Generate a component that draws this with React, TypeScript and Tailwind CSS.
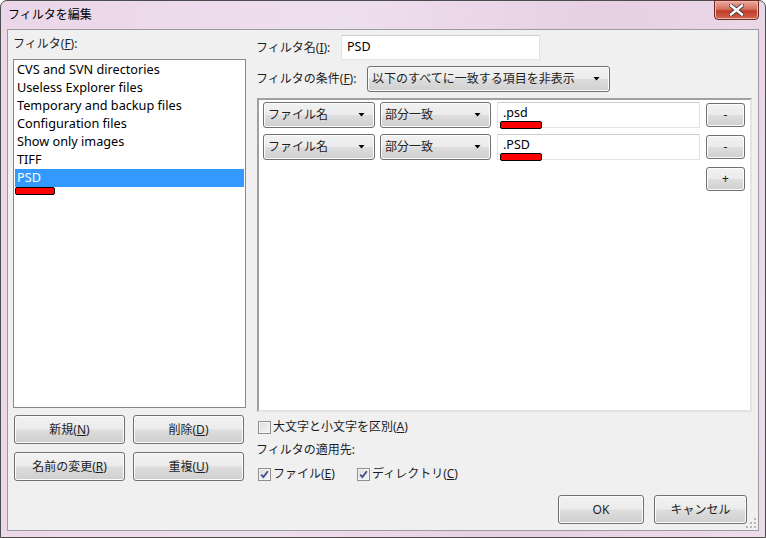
import React from "react";

const btnFace =
  "border border-[#707070] rounded-[3px] bg-[linear-gradient(#f2f2f2,#ebebeb_48%,#dddddd_52%,#cfcfcf)] shadow-[inset_0_0_0_1px_#fcfcfc]";

const Key = ({ k }: { k: string }) => <span className="underline">{k}</span>;

function Button({ className = "", children }: { className?: string; children: React.ReactNode }) {
  return (
    <div className={`flex items-center justify-center text-[12px] text-[#1e1e1e] ${btnFace} ${className}`}>
      {children}
    </div>
  );
}

function Select({ className = "", children }: { className?: string; children: React.ReactNode }) {
  return (
    <div className={`flex items-center justify-between pl-[4px] pr-[9px] text-[12px] text-[#1e1e1e] ${btnFace} ${className}`}>
      <span>{children}</span>
      <svg width="7" height="4" viewBox="0 0 7 4">
        <path d="M0.5 0h6L3.5 3.5z" fill="#000" />
      </svg>
    </div>
  );
}

function Input({ className = "", children }: { className?: string; children?: React.ReactNode }) {
  return (
    <div
      className={`relative flex items-center bg-white border border-[#dfe3e8] border-t-[#c9ced4] pl-[5px] text-[12.5px] text-black ${className}`}
    >
      {children}
    </div>
  );
}

function RedMark({ className = "" }: { className?: string }) {
  return <div className={`absolute h-[8px] bg-[#ff0000] border-[1.5px] border-black rounded-[2px] ${className}`} />;
}

function Checkbox({ checked }: { checked?: boolean }) {
  return (
    <div className="w-[13px] h-[13px] border border-[#8e8f8f] bg-[linear-gradient(135deg,#dcdcdc,#f6f6f6)] flex items-center justify-center shadow-[inset_0_0_0_1px_#f4f4f4]">
      {checked && (
        <svg width="9" height="9" viewBox="0 0 9 9">
          <path d="M1.2 4.6 L3.4 7 L7.8 1.2" stroke="#3c4f8c" strokeWidth="1.8" fill="none" />
        </svg>
      )}
    </div>
  );
}

const filters = [
  "CVS and SVN directories",
  "Useless Explorer files",
  "Temporary and backup files",
  "Configuration files",
  "Show only images",
  "TIFF",
  "PSD",
];

export default function App() {
  return (
    <div className="w-[766px] h-[538px] font-['Noto_Sans','Noto_Sans_CJK_JP',sans-serif] bg-white">
      <div className="relative w-full h-full rounded-t-[7px] border border-[#4d4d4d] bg-[linear-gradient(100deg,#ead6e8,#eedfee_40%,#e6d0e4_70%,#ecdcea)] flex flex-col">
        {/* title bar */}
        <div className="h-[28px] flex items-center pl-[7px] pb-[1px] text-[12px] text-black shrink-0">フィルタを編集</div>
        <div className="absolute right-[6px] top-[-1px] w-[45px] h-[20px] rounded-b-[4px] border border-[#6b2a22] bg-[linear-gradient(#eba89b,#d7705f_45%,#c23b28_55%,#d2664f)] flex items-center justify-center shadow-[inset_0_0_0_1px_#f0b7aa]">
          <svg width="15" height="12" viewBox="0 0 15 12">
            <path d="M2 1.5 L13 10.5 M13 1.5 L2 10.5" stroke="#3a3a3a" strokeWidth="4.2" strokeLinecap="square" />
            <path d="M2 1.5 L13 10.5 M13 1.5 L2 10.5" stroke="#fff" strokeWidth="2.4" strokeLinecap="square" />
          </svg>
        </div>

        {/* client */}
        <div className="mx-[6px] mb-[6px] flex-1 border border-[#9a9aa0] bg-[#f0f0f0] flex relative">
          {/* left column */}
          <div className="ml-[5px] w-[233px] flex flex-col">
            <div className="h-[29px] flex items-center pb-[1px] text-[12px] text-[#1e1e1e]">
              フィルタ(<Key k="F" />):
            </div>
            <div className="relative h-[349px] bg-white border border-[#828790] pt-[1px] px-[1px]">
              {filters.map((f, i) => (
                <div
                  key={f}
                  className={`h-[18px] flex items-center pl-[2px] pb-[1px] text-[12.7px] ${
                    i === filters.length - 1 ? "bg-[#3399ff] text-white" : "text-black"
                  }`}
                >
                  {f}
                </div>
              ))}
              <RedMark className="left-[1px] top-[127px] w-[40px]" />
            </div>
            <div className="mt-[7px] flex gap-[8px] pl-[1px]">
              <Button className="w-[111px] h-[29px]">
                新規(<Key k="N" />)
              </Button>
              <Button className="w-[111px] h-[29px]">
                削除(<Key k="D" />)
              </Button>
            </div>
            <div className="mt-[8px] flex gap-[8px] pl-[1px]">
              <Button className="w-[111px] h-[29px]">
                名前の変更(<Key k="R" />)
              </Button>
              <Button className="w-[111px] h-[29px]">
                重複(<Key k="U" />)
              </Button>
            </div>
          </div>

          {/* right column */}
          <div className="ml-[10px] w-[496px] flex flex-col">
            <div className="mt-[5px] h-[25px] flex items-center">
              <span className="w-[85px] text-[12px] text-[#1e1e1e]">
                フィルタ名(<Key k="I" />):
              </span>
              <Input className="w-[199px] h-[25px]">PSD</Input>
            </div>
            <div className="mt-[6px] h-[26px] flex items-center">
              <span className="w-[111px] text-[12px] text-[#1e1e1e]">
                フィルタの条件(<Key k="F" />):
              </span>
              <Select className="w-[243px] h-[26px]">以下のすべてに一致する項目を非表示</Select>
            </div>
            <div className="mt-[6px] ml-[1px] w-[495px] h-[314px] border-2 border-[#a0a0a0] border-r-[#e3e3e3] border-b-[#e3e3e3] bg-white p-[2px] pl-[4px]">
              <div className="flex flex-col">
                {[".psd", ".PSD"].map((v) => (
                  <div key={v} className="flex items-center mb-[6px]">
                    <Select className="w-[112px] h-[26px]">ファイル名</Select>
                    <Select className="ml-[5px] w-[111px] h-[26px]">部分一致</Select>
                    <Input className="ml-[6px] w-[203px] h-[26px] pl-[4px] pb-[3px]">
                      {v}
                      <RedMark className="left-[2px] top-[18px] w-[42px]" />
                    </Input>
                    <Button className="ml-[6px] w-[39px] h-[24px]">-</Button>
                  </div>
                ))}
                <div className="flex justify-end pr-[3px] mt-[1px]">
                  <Button className="w-[39px] h-[24px]">+</Button>
                </div>
              </div>
            </div>
            <div className="mt-[7px] h-[16px] flex items-center gap-[2px] ml-[2px] text-[12px] text-[#1e1e1e]">
              <Checkbox />
              <span>
                大文字と小文字を区別(<Key k="A" />)
              </span>
            </div>
            <div className="mt-[7px] h-[16px] flex items-center text-[12px] text-[#1e1e1e]">フィルタの適用先:</div>
            <div className="mt-[8px] h-[16px] flex items-center ml-[2px] text-[12px] text-[#1e1e1e]">
              <Checkbox checked />
              <span className="ml-[2px] w-[84px]">
                ファイル(<Key k="E" />)
              </span>
              <Checkbox checked />
              <span className="ml-[2px]">
                ディレクトリ(<Key k="C" />)
              </span>
            </div>
            <div className="mt-[13px] flex justify-end gap-[10px] pr-[5px]">
              <Button className="w-[86px] h-[29px]">OK</Button>
              <Button className="w-[93px] h-[29px]">キャンセル</Button>
            </div>
          </div>

          <svg className="absolute right-[1px] bottom-[1px]" width="11" height="11" viewBox="0 0 11 11">
            {[
              [8, 0],
              [8, 4],
              [4, 4],
              [8, 8],
              [4, 8],
              [0, 8],
            ].map(([x, y]) => (
              <rect key={`${x}-${y}`} x={x} y={y} width="2" height="2" fill="#b8b8b8" />
            ))}
          </svg>
        </div>
      </div>
    </div>
  );
}
